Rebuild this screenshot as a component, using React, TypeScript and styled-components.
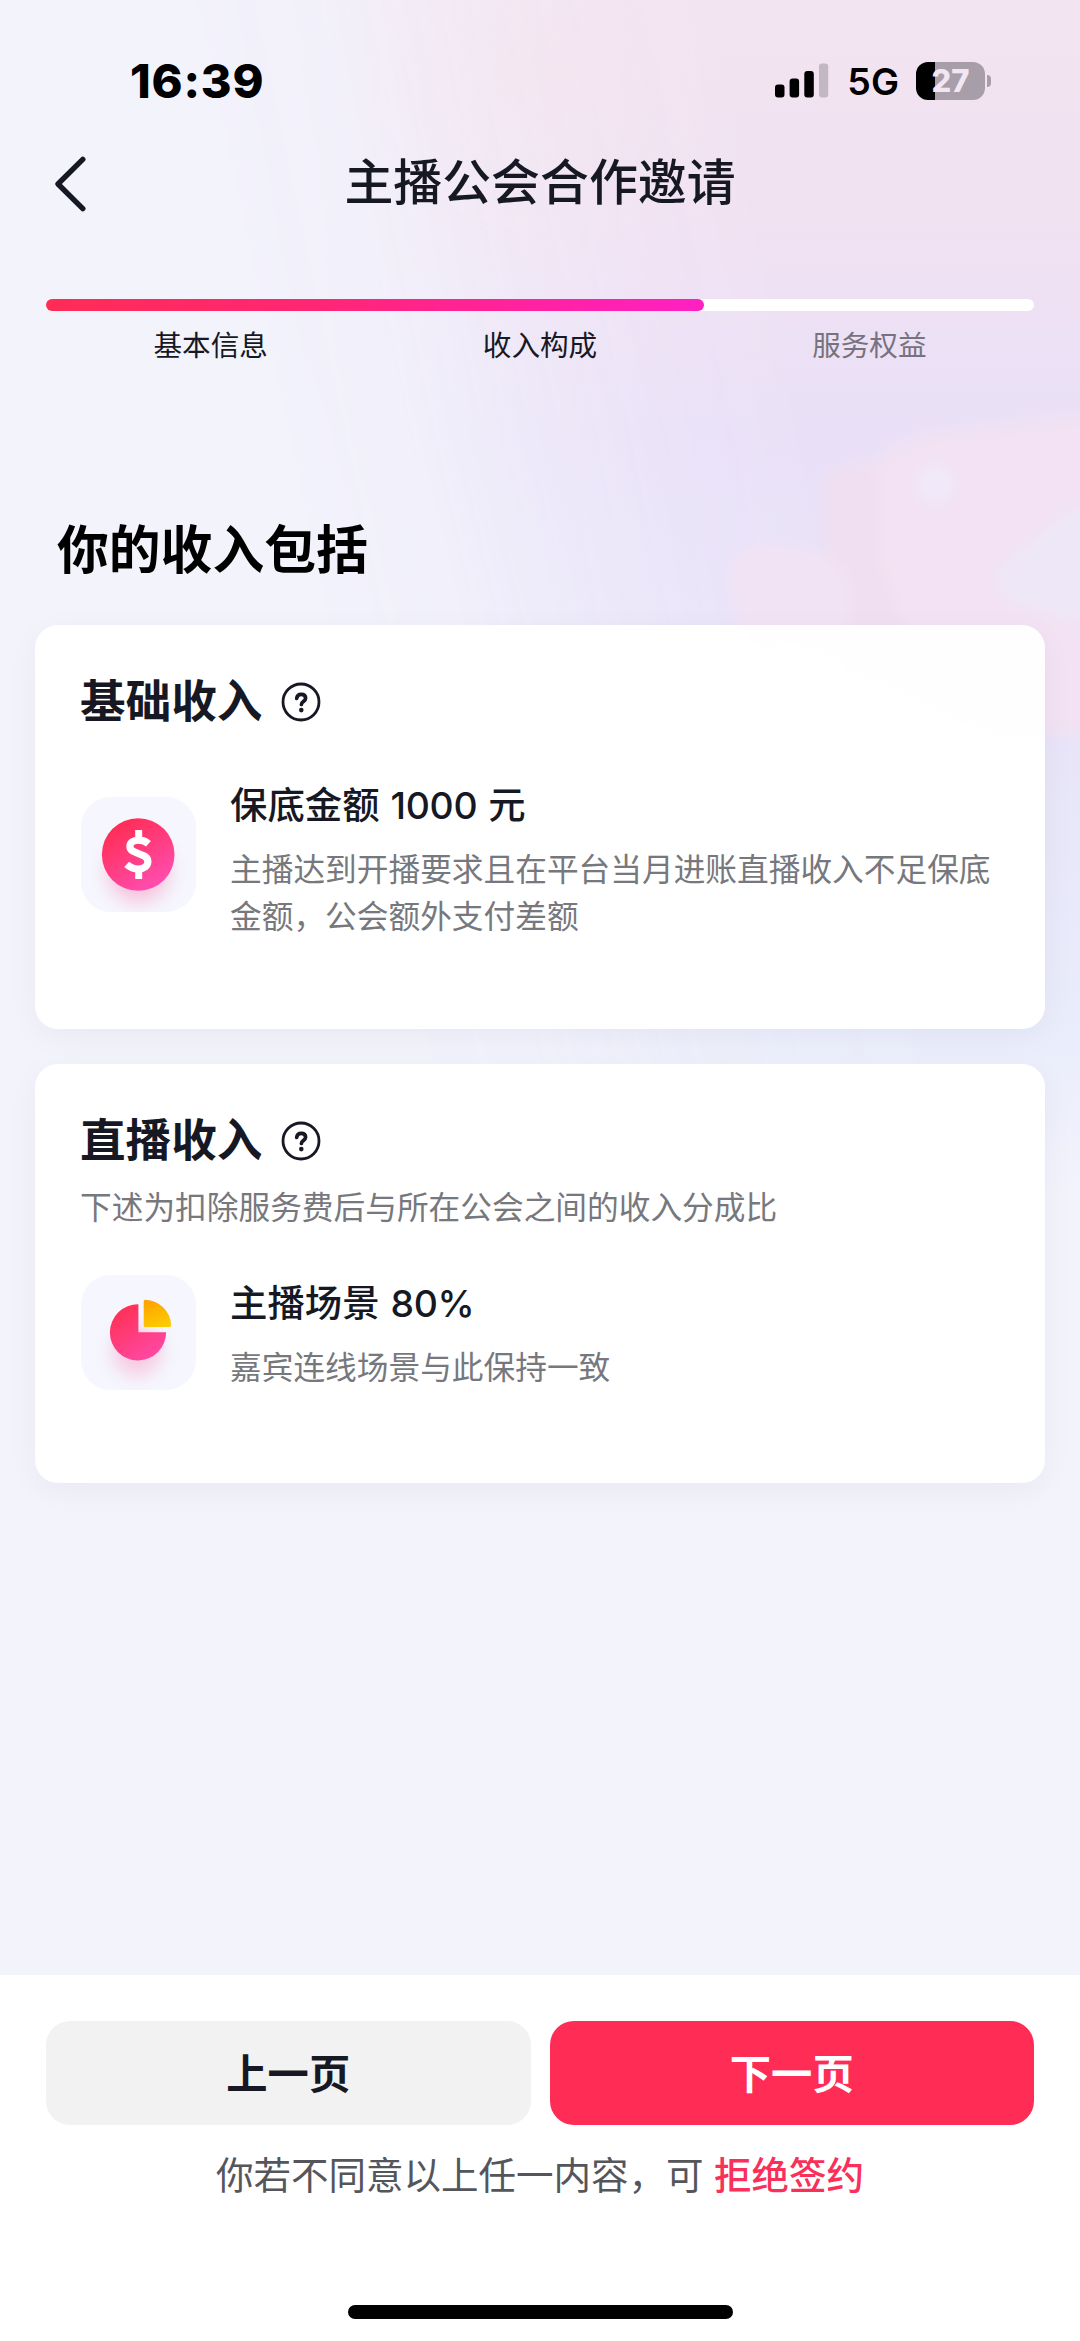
import React from 'react';
import styled, { createGlobalStyle } from 'styled-components';

const Global = createGlobalStyle`
  body { margin: 0; background: #f3f3fc; }
  * { box-sizing: border-box; }
`;

const Page = styled.main`
  position: relative;
  width: 1080px;
  height: 2341px;
  display: flex;
  flex-direction: column;
  overflow: hidden;
  background: #f3f3fc;
  color: #161823;
  font-family: Inter, 'Noto Sans CJK SC', sans-serif;
  isolation: isolate;
`;

const Art = styled.svg`
  position: absolute;
  top: 0;
  left: 0;
  z-index: -1;
`;

const StatusBar = styled.header`
  display: flex;
  align-items: center;
  justify-content: space-between;
  height: 110px;
  padding: 51px 89px 0 130px;
  color: #000;
`;

const Clock = styled.time`
  font-size: 47px;
  font-weight: 800;
  line-height: 58px;
  letter-spacing: 0.8px;
`;

const StatusIcons = styled.div`
  display: flex;
  align-items: center;
`;

const Network = styled.span`
  margin: 3px 17px 0 18px;
  font-size: 37.5px;
  font-weight: 600;
  line-height: 46px;
`;

const Battery = styled.span`
  display: flex;
  align-items: center;
  gap: 2px;
`;

const BatteryBody = styled.span`
  display: flex;
  align-items: center;
  justify-content: center;
  width: 69px;
  height: 38px;
  border-radius: 12px;
  background: linear-gradient(90deg, #000 19px, #a89eaa 19px);
  color: #f2e6f3;
  font-size: 31px;
  font-weight: 800;
  line-height: 38px;
`;

const BatteryCap = styled.span`
  width: 4px;
  height: 12px;
  border-radius: 0 4px 4px 0;
  background: #a89eaa;
`;

const NavBar = styled.nav`
  display: grid;
  grid-template-columns: 1fr auto 1fr;
  align-items: center;
  height: 146px;
  padding: 0 46px;
`;

const BackButton = styled.button`
  display: flex;
  justify-self: start;
  padding: 0;
  border: 0;
  background: none;
`;

const NavTitle = styled.h1`
  margin: 0;
  font-size: 48.9px;
  font-weight: 500;
  line-height: 60px;
`;

const Progress = styled.section`
  margin: 43px 46px 0;
`;

const Track = styled.div`
  height: 12px;
  border-radius: 6px;
  background: #fff;
`;

const Fill = styled.div`
  width: 66.6%;
  height: 12px;
  border-radius: 6px;
  background: linear-gradient(90deg, #ff2c55, #ff2674 40%, #ff20c4);
`;

const Steps = styled.div`
  display: grid;
  grid-template-columns: repeat(3, 1fr);
  margin-top: 15px;
`;

const Step = styled.span<{ $muted?: boolean }>`
  text-align: center;
  font-size: 28.6px;
  line-height: 40px;
  color: ${(p) => (p.$muted ? '#77727f' : '#161823')};
`;

const Heading = styled.h2`
  margin: 154px 0 0 57px;
  font-size: 51.8px;
  font-weight: 600;
  line-height: 60px;
  color: #000;
`;

const Cards = styled.div`
  display: flex;
  flex-direction: column;
  gap: 35px;
  margin: 45px 35px 0;
`;

const Card = styled.section<{ $height: number }>`
  height: ${(p) => p.$height}px;
  padding: 47px 46px 0 45px;
  border-radius: 23px;
  background: rgba(255, 255, 255, 0.97);
  box-shadow: 0 8px 32px rgba(20, 20, 40, 0.045);
`;

const CardTitle = styled.h3`
  display: flex;
  align-items: center;
  gap: 19px;
  margin: 0;
  font-size: 45.6px;
  font-weight: 600;
  line-height: 60px;
`;

const Note = styled.p`
  margin: 0;
  font-size: 31.7px;
  line-height: 47px;
  color: #77787d;
`;

const CardNote = styled(Note)`
  margin-top: 13px;
`;

const Item = styled.div<{ $top: number }>`
  display: flex;
  align-items: flex-start;
  gap: 34px;
  margin-top: ${(p) => p.$top}px;
  padding-left: 1px;
`;

const IconTile = styled.div<{ $shift: number }>`
  flex: none;
  width: 115px;
  height: 115px;
  margin-top: ${(p) => p.$shift}px;
  border-radius: 30px;
  background: #f5f6fe;
  overflow: hidden;
`;

const ItemText = styled.div<{ $shift?: number }>`
  flex: 1;
  margin-top: ${(p) => p.$shift ?? 0}px;
`;

const ItemTitle = styled.h4`
  margin: 0 0 15px;
  font-size: 37.4px;
  font-weight: 500;
  line-height: 50px;
`;

const Figure = styled.span`
  margin: 0 1px;
  letter-spacing: -0.3px;
`;

const Footer = styled.footer`
  display: flex;
  flex-direction: column;
  align-items: center;
  height: 366px;
  margin-top: auto;
  padding: 46px 46px 22px;
  background: #fff;
`;

const Actions = styled.div`
  display: grid;
  grid-template-columns: 1fr 1fr;
  gap: 19px;
  width: 100%;
`;

const Button = styled.button<{ $primary?: boolean }>`
  height: 104px;
  padding: 2px 0 0;
  border: 0;
  border-radius: 24px;
  background: ${(p) => (p.$primary ? '#ff2c55' : '#f2f2f2')};
  color: ${(p) => (p.$primary ? '#fff' : '#161823')};
  font-family: inherit;
  font-size: 41.3px;
  font-weight: 600;
  line-height: 60px;
`;

const Decline = styled.p`
  margin: 26px 0 0;
  font-size: 37.5px;
  line-height: 50px;
  color: #55565b;
  white-space: nowrap;
`;

const DeclineLink = styled.a`
  color: #f9305a;
  font-weight: 500;
`;

const HomeIndicator = styled.div`
  width: 385px;
  height: 14px;
  margin-top: auto;
  border-radius: 7px;
  background: #000;
`;

function BackgroundArt() {
  return (
    <Art width="1080" height="1200" viewBox="0 0 1080 1200" aria-hidden="true">
      <defs>
        <linearGradient id="wash" x1="0" y1="0" x2="0" y2="1">
          <stop offset="0" stopColor="#f2e4f0" />
          <stop offset="0.2" stopColor="#f0e1f2" />
          <stop offset="0.36" stopColor="#e9e0f7" />
          <stop offset="0.6" stopColor="#e8e4f9" />
          <stop offset="0.85" stopColor="#e9ecfb" />
          <stop offset="1" stopColor="#f3f3fc" />
        </linearGradient>
        <linearGradient id="reveal" gradientUnits="userSpaceOnUse" x1="180" y1="0" x2="700" y2="-110">
          <stop offset="0" stopColor="#fff" stopOpacity="0" />
          <stop offset="0.25" stopColor="#fff" stopOpacity="0.14" />
          <stop offset="0.5" stopColor="#fff" stopOpacity="0.58" />
          <stop offset="0.75" stopColor="#fff" stopOpacity="0.88" />
          <stop offset="1" stopColor="#fff" />
        </linearGradient>
        <mask id="fade">
          <path d="M0 0H1080V1200H0Z" fill="url(#reveal)" />
        </mask>
        <filter id="soft" x="-30%" y="-30%" width="160%" height="160%">
          <feGaussianBlur stdDeviation="7" />
        </filter>
        <filter id="softer" x="-100%" y="-100%" width="300%" height="300%">
          <feGaussianBlur stdDeviation="60" />
        </filter>
      </defs>
      <path d="M0 0H1080V1200H0Z" fill="url(#wash)" mask="url(#fade)" />
      <ellipse cx="540" cy="70" rx="80" ry="80" fill="#f6e4ea" opacity="0.45" filter="url(#softer)" />
      <g filter="url(#soft)">
        <path d="M825 650V480Q830 466 875 462Q905 430 960 430L1100 412V735H1000Z" fill="#f2e2f3" />
        <path d="M825 640V482Q840 466 878 466V560L908 640Z" fill="#f0dff0" />
        <path d="M730 570Q735 540 775 545Q830 550 850 580V650H750Q730 610 730 570Z" fill="#f2e3f4" />
        <path d="M1100 500Q1060 510 1030 545Q990 565 997 590Q1020 610 1100 625Z" fill="#eee7f7" />
        <circle cx="935" cy="484" r="19" fill="#f1e9f9" />
      </g>
    </Art>
  );
}

function Signal() {
  return (
    <svg width="54" height="36" viewBox="0 0 54 36">
      <rect x="0" y="21.5" width="9.5" height="13" rx="3" />
      <rect x="14.6" y="15.500" width="9.5" height="19" rx="3" />
      <rect x="29.3" y="8" width="9.5" height="26.500" rx="3" />
      <rect x="44" y="0.5" width="9.2" height="34" rx="3" fill="#c2b8c4" />
    </svg>
  );
}

function BackIcon() {
  return (
    <svg width="46" height="60" viewBox="0 0 46 60" fill="none" stroke="#161823" strokeWidth="5.4" strokeLinecap="round" strokeLinejoin="round">
      <path d="M36.8 6.3 12 31l24.800 24.700" />
    </svg>
  );
}

function HelpIcon() {
  return (
    <svg width="40" height="40" viewBox="0 0 40 40" fill="none" stroke="#161823">
      <circle cx="20" cy="20" r="18" strokeWidth="2.8" />
      <path d="M15.700 16.400c.3-2.500 2-4 4.500-4 2.600 0 4.400 1.400 4.400 3.800 0 3.100-4.200 3.400-4.200 6.200" strokeWidth="3.700" strokeLinecap="round" />
      <circle cx="20.300" cy="28.100" r="2.300" fill="#161823" stroke="none" />
    </svg>
  );
}

function CoinIcon() {
  return (
    <svg width="115" height="115" viewBox="0 0 115 115">
      <defs>
        <linearGradient id="coin" x1="0.2" y1="0.1" x2="0.75" y2="1">
          <stop offset="0" stopColor="#ff2d55" />
          <stop offset="1" stopColor="#ff4fb4" />
        </linearGradient>
        <filter id="coinGlow" x="-50%" y="-50%" width="200%" height="200%">
          <feGaussianBlur stdDeviation="9" />
        </filter>
      </defs>
      <circle cx="57.500" cy="74" r="31" fill="#ff4c8c" opacity="0.3" filter="url(#coinGlow)" />
      <circle cx="57.200" cy="57.500" r="36.300" fill="url(#coin)" />
      <path d="M57.700 33v9M57.700 73v9" stroke="#fff" strokeWidth="7" />
      <path d="M67.500 46.700c-2.600-2.300-5.900-3.500-10-3.500-5.400 0-8.600 2.600-8.600 6.400 0 8.500 18 5.400 18 15 0 4.400-3.900 7.400-9.500 7.400-4.300 0-8.400-1.600-11.700-4.600" fill="none" stroke="#fff" strokeWidth="7.200" />
    </svg>
  );
}

function PieIcon() {
  return (
    <svg width="115" height="115" viewBox="0 0 115 115">
      <defs>
        <linearGradient id="pie" x1="0.2" y1="0.1" x2="0.75" y2="1">
          <stop offset="0" stopColor="#ff3158" />
          <stop offset="1" stopColor="#ff4aa8" />
        </linearGradient>
        <linearGradient id="slice" x1="0.2" y1="0" x2="0.6" y2="1">
          <stop offset="0" stopColor="#ffa200" />
          <stop offset="1" stopColor="#fccb00" />
        </linearGradient>
        <filter id="pieGlow" x="-60%" y="-60%" width="220%" height="220%">
          <feGaussianBlur stdDeviation="9" />
        </filter>
      </defs>
      <circle cx="56" cy="76" r="24" fill="#ff4c8c" opacity="0.26" filter="url(#pieGlow)" />
      <path d="M57.400 57.300V29.300a28.100 28.100 0 1 0 27.700 28Z" fill="url(#pie)" />
      <path d="M62.700 26.700q0-2 2-1.900A26.500 26.500 0 0 1 90.200 50q.1 2.100-1.900 2.100H64.600q-1.900 0-1.900-1.900Z" fill="url(#slice)" />
    </svg>
  );
}

export default function App() {
  return (
    <Page>
      <Global />
      <BackgroundArt />
      <StatusBar>
        <Clock>16:39</Clock>
        <StatusIcons>
          <Signal />
          <Network>5G</Network>
          <Battery>
            <BatteryBody>27</BatteryBody>
            <BatteryCap />
          </Battery>
        </StatusIcons>
      </StatusBar>
      <NavBar>
        <BackButton aria-label="返回">
          <BackIcon />
        </BackButton>
        <NavTitle>主播公会合作邀请</NavTitle>
      </NavBar>
      <Progress>
        <Track>
          <Fill />
        </Track>
        <Steps>
          <Step>基本信息</Step>
          <Step>收入构成</Step>
          <Step $muted>服务权益</Step>
        </Steps>
      </Progress>
      <Heading>你的收入包括</Heading>
      <Cards>
        <Card $height={404}>
          <CardTitle>
            基础收入
            <HelpIcon />
          </CardTitle>
          <Item $top={49}>
            <IconTile $shift={16}>
              <CoinIcon />
            </IconTile>
            <ItemText>
              <ItemTitle>
                保底金额 <Figure>1000</Figure> 元
              </ItemTitle>
              <Note>主播达到开播要求且在平台当月进账直播收入不足保底金额，公会额外支付差额</Note>
            </ItemText>
          </Item>
        </Card>
        <Card $height={419}>
          <CardTitle>
            直播收入
            <HelpIcon />
          </CardTitle>
          <CardNote>下述为扣除服务费后与所在公会之间的收入分成比</CardNote>
          <Item $top={44}>
            <IconTile $shift={0}>
              <PieIcon />
            </IconTile>
            <ItemText $shift={4}>
              <ItemTitle>
                主播场景 <Figure>80%</Figure>
              </ItemTitle>
              <Note>嘉宾连线场景与此保持一致</Note>
            </ItemText>
          </Item>
        </Card>
      </Cards>
      <Footer>
        <Actions>
          <Button>上一页</Button>
          <Button $primary>下一页</Button>
        </Actions>
        <Decline>
          你若不同意以上任一内容，可 <DeclineLink>拒绝签约</DeclineLink>
        </Decline>
        <HomeIndicator />
      </Footer>
    </Page>
  );
}
